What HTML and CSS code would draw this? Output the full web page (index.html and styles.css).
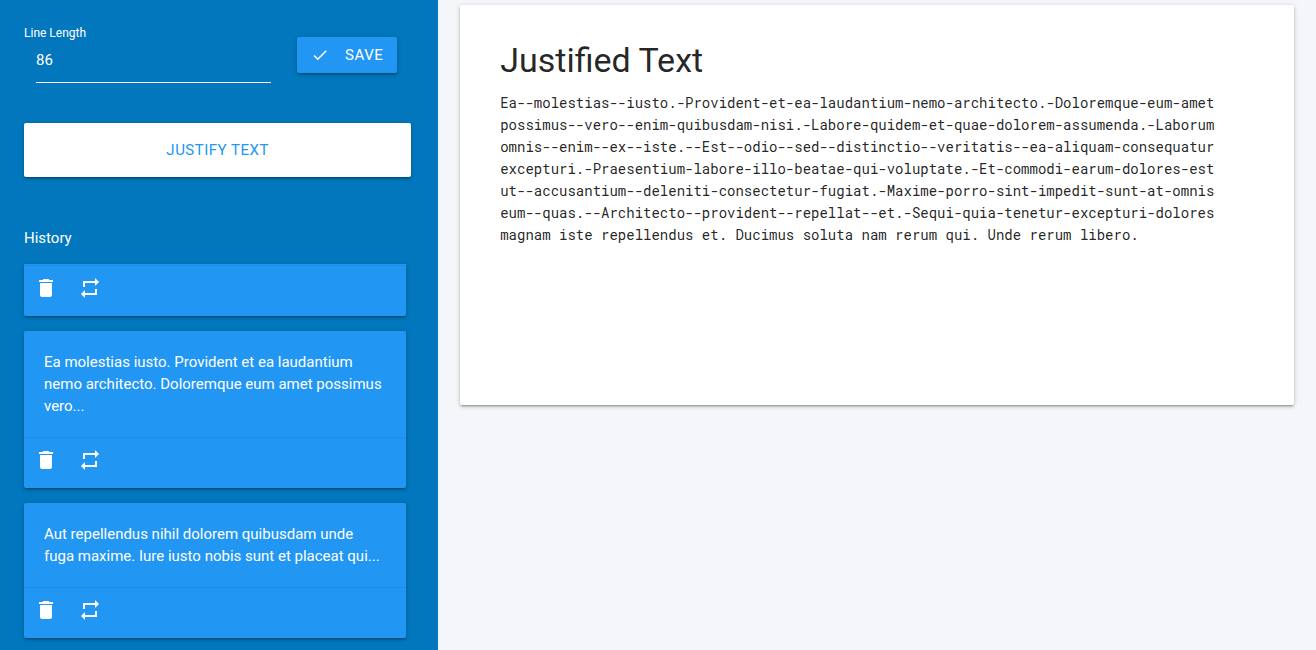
FILE: index.html
```html
<!DOCTYPE html>
<html lang="en">
<head>
<meta charset="utf-8">
<meta name="viewport" content="width=device-width, initial-scale=1">
<title>Justified Text</title>
<link rel="stylesheet" href="styles.css">
</head>
<body>
<svg class="sprite" aria-hidden="true">
  <symbol id="icon-delete" viewBox="0 0 24 24"><path d="M6 19c0 1.100.9 2 2 2h8c1.100 0 2-.9 2-2V7H6v12zM19 4h-3.500l-1-1h-5l-1 1H5v2h14V4z"/></symbol>
  <symbol id="icon-repeat" viewBox="0 0 24 24"><path d="M7 7h10v3l4-4-4-4v3H5v6h2V7zm10 10H7v-3l-4 4 4 4v-3h12v-6h-2v4z"/></symbol>
  <symbol id="icon-check" viewBox="0 0 24 24"><path d="M9 16.170L4.830 12l-1.420 1.410L9 19 21 7l-1.410-1.410z"/></symbol>
</svg>
<div class="layout">
  <aside class="sidebar">
    <form class="length-form">
      <div class="field">
        <label class="field-label" for="line-length">Line Length</label>
        <input class="field-input" id="line-length" type="text" inputmode="numeric" value="86">
      </div>
      <button class="btn btn-save" type="button"><svg class="check"><use href="#icon-check"/></svg>Save</button>
    </form>
    <button class="btn btn-justify" type="button">Justify Text</button>
    <section class="history">
      <h2 class="history-title">History</h2>
      <article class="card card-empty">
        <div class="card-actions">
          <button class="icon-btn" type="button" aria-label="Delete"><svg class="icon"><use href="#icon-delete"/></svg></button>
          <button class="icon-btn" type="button" aria-label="Repeat"><svg class="icon"><use href="#icon-repeat"/></svg></button>
        </div>
      </article>
      <article class="card">
        <p class="card-text">Ea molestias iusto. Provident et ea laudantium nemo architecto. Doloremque eum amet possimus vero...</p>
        <div class="card-actions">
          <button class="icon-btn" type="button" aria-label="Delete"><svg class="icon"><use href="#icon-delete"/></svg></button>
          <button class="icon-btn" type="button" aria-label="Repeat"><svg class="icon"><use href="#icon-repeat"/></svg></button>
        </div>
      </article>
      <article class="card">
        <p class="card-text">Aut repellendus nihil dolorem quibusdam unde fuga maxime. Iure iusto nobis sunt et placeat qui...</p>
        <div class="card-actions">
          <button class="icon-btn" type="button" aria-label="Delete"><svg class="icon"><use href="#icon-delete"/></svg></button>
          <button class="icon-btn" type="button" aria-label="Repeat"><svg class="icon"><use href="#icon-repeat"/></svg></button>
        </div>
      </article>
    </section>
  </aside>
  <main class="content">
    <section class="paper">
      <h1 class="paper-title">Justified Text</h1>
      <pre class="paper-text">Ea--molestias--iusto.-Provident-et-ea-laudantium-nemo-architecto.-Doloremque-eum-amet
possimus--vero--enim-quibusdam-nisi.-Labore-quidem-et-quae-dolorem-assumenda.-Laborum
omnis--enim--ex--iste.--Est--odio--sed--distinctio--veritatis--ea-aliquam-consequatur
excepturi.-Praesentium-labore-illo-beatae-qui-voluptate.-Et-commodi-earum-dolores-est
ut--accusantium--deleniti-consectetur-fugiat.-Maxime-porro-sint-impedit-sunt-at-omnis
eum--quas.--Architecto--provident--repellat--et.-Sequi-quia-tenetur-excepturi-dolores
magnam iste repellendus et. Ducimus soluta nam rerum qui. Unde rerum libero.</pre>
    </section>
  </main>
</div>
</body>
</html>
```
FILE: styles.css
```css
*, *::before, *::after { box-sizing: border-box; }

body {
  margin: 0;
  background: #f5f6fa;
  color: rgba(0, 0, 0, 0.87);
  font: 15px/22px Roboto, "Liberation Sans", sans-serif;
}

h1, h2, p, pre { margin: 0; font-weight: 400; }

.sprite { display: none; }

.layout {
  display: grid;
  grid-template-columns: 33.3% minmax(0, 1fr);
  min-height: 100vh;
}

.sidebar {
  padding: 22px 27px 12px 24px;
  background: #0277bd;
  color: #fff;
}

.length-form {
  display: flex;
  align-items: flex-start;
  gap: 26px;
  padding-right: 14px;
}

.field { flex: 1; min-width: 0; display: flex; flex-direction: column; }
.field-label { font-size: 12px; }

.field-input {
  height: 39px;
  margin-left: 12px;
  padding: 0 0 6px;
  border: 0;
  border-bottom: 1px solid #fff;
  outline: 0;
  background: transparent;
  color: #fff;
  font: inherit;
}

.btn, .card, .paper {
  border-radius: 2px;
  box-shadow: 0 2px 2px 0 rgba(0, 0, 0, 0.14), 0 3px 1px -2px rgba(0, 0, 0, 0.12), 0 1px 5px 0 rgba(0, 0, 0, 0.2);
}

.btn {
  border: 0;
  font: inherit;
  letter-spacing: 0.5px;
  text-transform: uppercase;
  cursor: pointer;
}

.btn-save {
  display: flex;
  align-items: center;
  gap: 16px;
  height: 36px;
  margin-top: 15px;
  padding: 0 14px;
  background: #2196f3;
  color: #fff;
}

.check { width: 18px; height: 18px; fill: currentColor; }

.btn-justify {
  width: 100%;
  height: 54px;
  margin-top: 40px;
  background: #fff;
  color: #2196f3;
}

.history {
  display: flex;
  flex-direction: column;
  gap: 15px;
  margin-top: 50px;
  padding-right: 5px;
}

.history-title { font-size: 15px; }

.card { background: #2196f3; }
.card-empty { padding-top: 1px; border-radius: 0 0 2px 2px; }
.card-text { padding: 20px; }

.card-actions {
  display: flex;
  gap: 20px;
  padding: 10px 10px 16px;
  border-top: 1px solid rgba(21, 101, 192, 0.2);
}

.icon-btn {
  display: flex;
  padding: 0;
  border: 0;
  background: transparent;
  color: #fff;
  cursor: pointer;
}

.icon { width: 24px; height: 24px; fill: currentColor; }

.content { padding: 5px 22px; }

.paper {
  min-height: 400px;
  padding: 34px 40px;
  background: #fff;
}

.paper-title { font-size: 34px; line-height: 42px; }

.paper-text {
  margin-top: 11px;
  font: 14px/22px "Roboto Mono", "Liberation Mono", monospace;
}
```
